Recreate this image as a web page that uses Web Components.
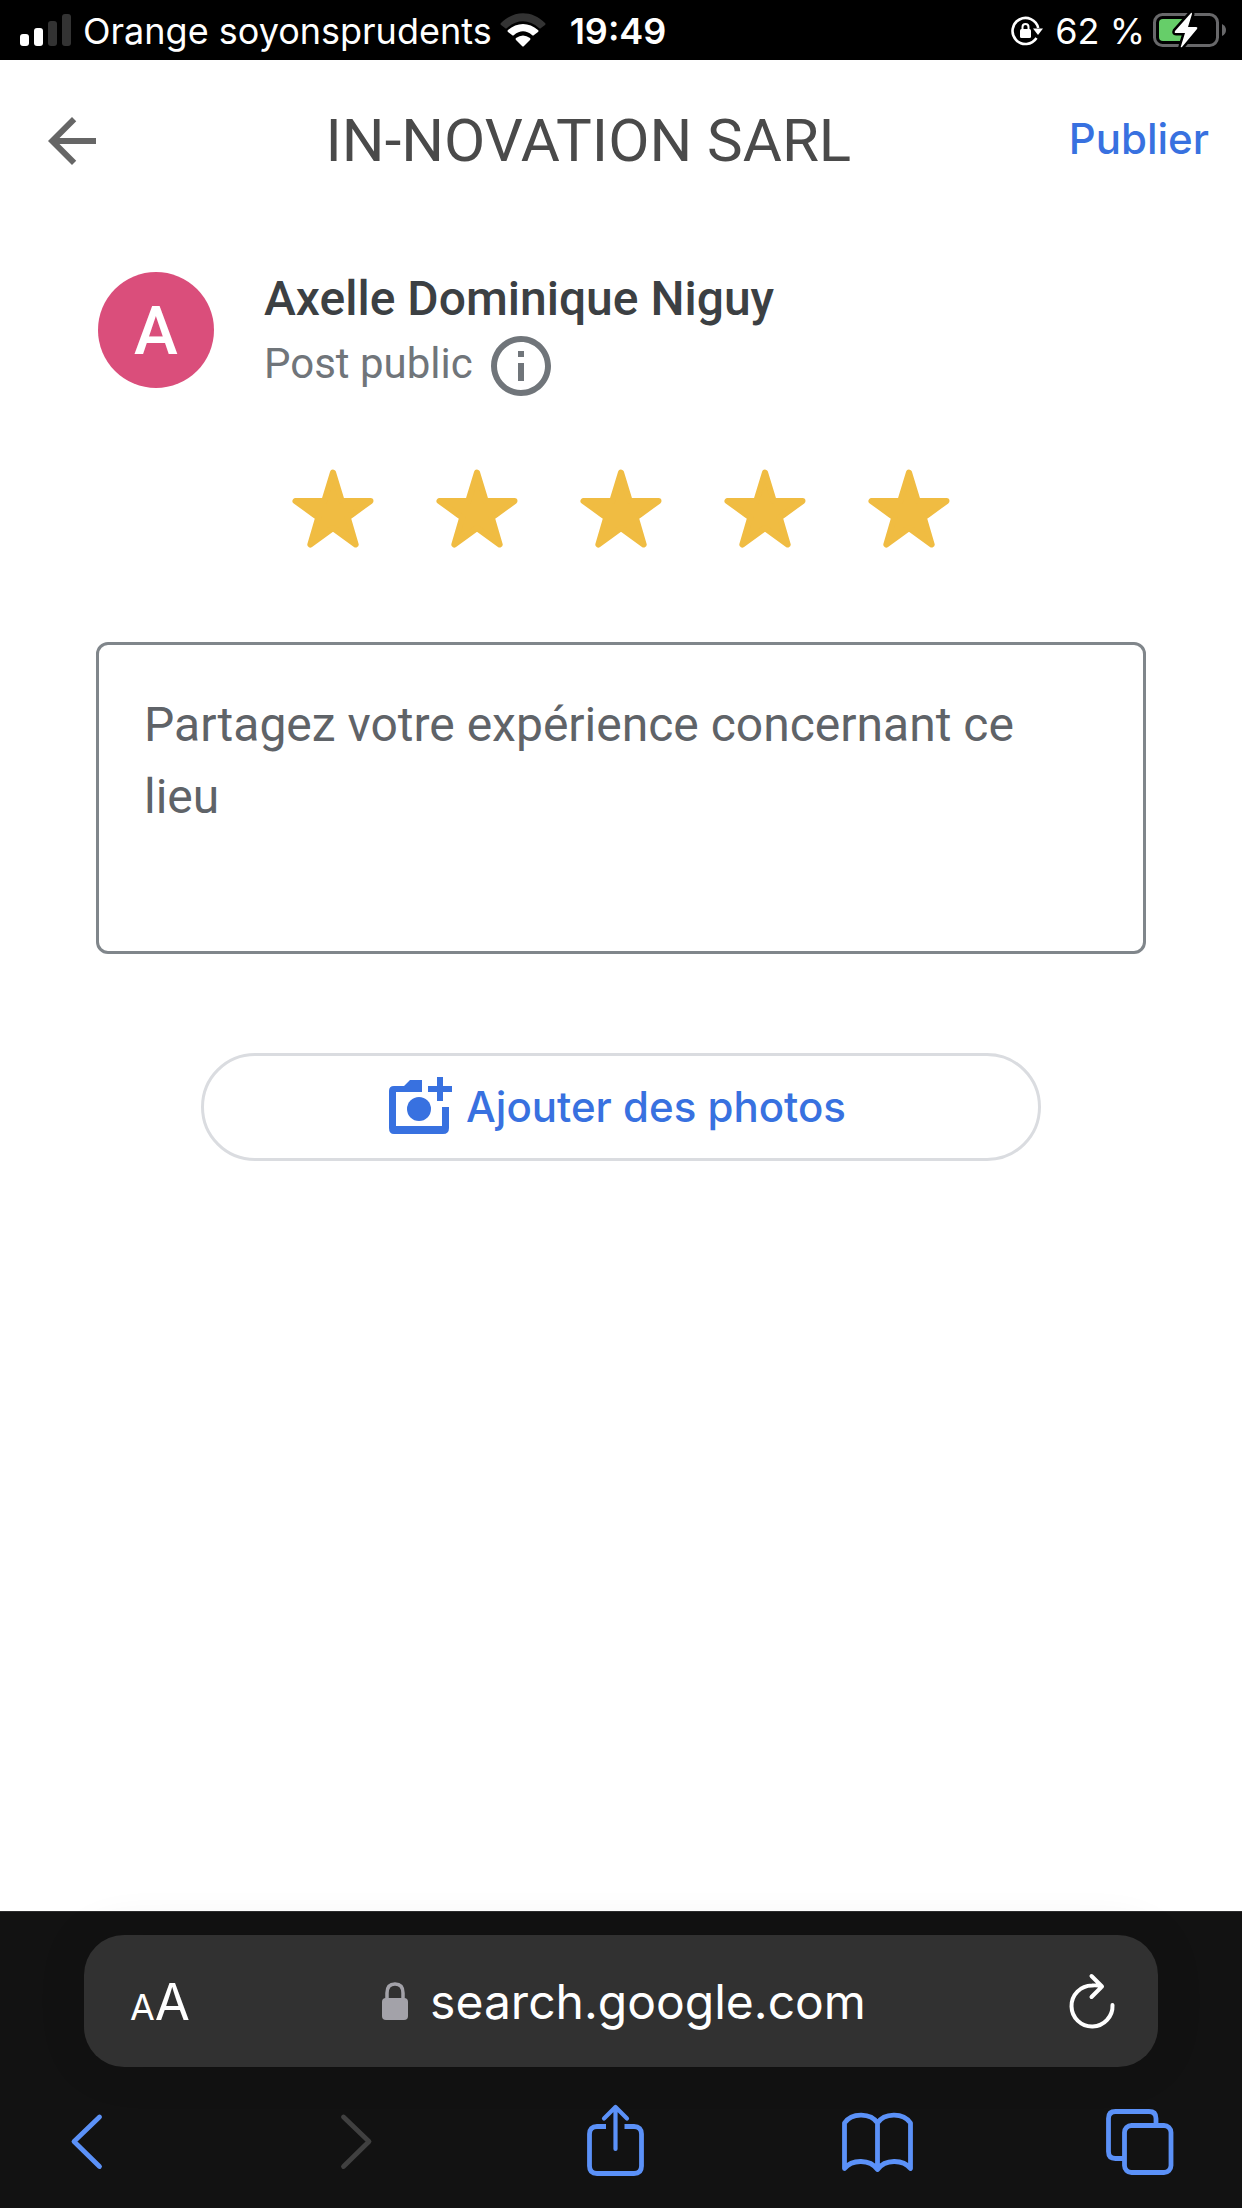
<!DOCTYPE html>
<html lang="fr">
<head>
<meta charset="utf-8">
<meta name="viewport" content="width=device-width, initial-scale=1">
<title>IN-NOVATION SARL</title>
<style>
  body { margin: 0; background: #fff; font-family: Roboto, "Liberation Sans", sans-serif; }
</style>
</head>
<body>
<review-app></review-app>

<script>
const define = (name, css, html) => {
  const template = document.createElement('template');
  template.innerHTML = `<style>
    *, *::before { box-sizing: border-box; }
    button { margin: 0; padding: 0; border: 0; background: none; font: inherit; color: inherit; cursor: pointer; }
    svg { display: block; flex: none; overflow: visible; }
    ${css}</style>${html}`;
  customElements.define(name, class extends HTMLElement {
    constructor() {
      super();
      this.attachShadow({ mode: 'open' }).append(template.content.cloneNode(true));
    }
  });
};

/* Phone status bar: network, time, battery */
define('status-bar', `
  :host { display: flex; align-items: center; justify-content: space-between; height: 60px; padding: 2px 16px 0 20px;
    background: #000; color: #fff; font: 400 36px/56px Inter, "Liberation Sans", sans-serif; white-space: nowrap; }
  div { display: flex; align-items: center; }
  .carrier { margin: 0 8px 0 12px; }
  time { margin-left: 24px; font-weight: 600; }
  .charge { margin: 0 8px 0 12px; }
`, `
  <div>
    <svg width="51" height="34" viewBox="0 1 51 34" aria-hidden="true">
      <g fill="#fff"><rect y="21" width="9" height="12" rx="3"/><rect x="14" y="15" width="9" height="18" rx="3"/></g>
      <g fill="#333"><rect x="28" y="8" width="9" height="25" rx="3"/><rect x="42" y="1" width="9" height="32" rx="3"/></g>
    </svg>
    <span class="carrier">Orange soyonsprudents</span>
    <svg width="46" height="34" viewBox="0 1 46 34" aria-hidden="true">
      <path fill="#333" d="M1 10C14-3 32-3 45 10Q46 11 45 12L41 15Q40 16 39 15C29 6 17 6 7 15Q6 16 5 15L1 12Q0 11 1 10Z"/>
      <path fill="#fff" d="M8 17C17 9 29 9 38 17Q39 18 38 19L34 22Q33 23 32 22C26 17 20 17 14 22Q13 23 12 22L8 19Q7 18 8 17Z"/>
      <path fill="#fff" d="M16 25Q23 20 30 25Q31 26 30 27L24 33Q23 34 22 33L16 27Q15 26 16 25Z"/>
    </svg>
    <time>19:49</time>
  </div>
  <div>
    <svg width="32" height="30" viewBox="0 0 32 30" aria-hidden="true">
      <path d="M27.200 12A13 13 0 1 0 25.500 22" fill="none" stroke="#fff" stroke-width="2.600"/>
      <path d="M22 12.500H32L27 19Z" fill="#fff"/>
      <rect x="9" y="13" width="11" height="9" rx="1.500" fill="#fff"/>
      <path d="M11.500 14V11Q11.500 8 14.500 8T17.500 11V14" fill="none" stroke="#fff" stroke-width="2"/>
    </svg>
    <span class="charge">62 %</span>
    <svg width="73" height="36" viewBox="0 1 73 36" aria-hidden="true">
      <rect x="1.500" y="2.500" width="63" height="31" rx="8" fill="none" stroke="#68686a" stroke-width="3"/>
      <rect x="6" y="7" width="26" height="22" rx="4" fill="#66ce69"/>
      <path d="M69 12Q73 14 73 18T69 24Z" fill="#68686a"/>
      <path d="M38 1Q39 0 39 2L35 15H43Q45 15 44 17L29 35Q27 36 28 34L32 21H23Q21 21 22 19Z" fill="#fff" stroke="#000" stroke-width="5" paint-order="stroke"/>
    </svg>
  </div>
`);

/* Title bar of the review form */
define('review-header', `
  :host { display: flex; align-items: center; height: 162px; padding: 0 33px 0 36px; }
  h1 { flex: 1; margin: 0; text-align: center; font-size: 60px; font-weight: 400; line-height: 72px; color: #4a4a4a; }
  .publish { padding-bottom: 4px; font: 500 42px/60px Inter, "Liberation Sans", sans-serif; color: #3871e0; }
`, `
  <button type="button" aria-label="Retour">
    <svg width="72" height="72" viewBox="0 0 24 24"><path fill="#666" d="M20 11H7.830l5.590-5.590L12 4l-8 8 8 8 1.410-1.410L7.830 13H20v-2z"/></svg>
  </button>
  <h1><slot></slot></h1>
  <button type="button" class="publish">Publier</button>
`);

/* Author of the review */
define('author-card', `
  :host { display: flex; align-items: flex-start; gap: 50px; }
  .avatar { display: flex; align-items: center; justify-content: center; flex: none; width: 116px; height: 116px; margin-top: 3px; padding-top: 4px;
    border-radius: 50%; background: #da4e7b; color: #fff; font-size: 66px; line-height: 80px; font-weight: 500; }
  .name { font-size: 48px; line-height: 60px; font-weight: 500; color: #3c4043; }
  .visibility { display: flex; gap: 12px; margin-top: 1px; font-size: 42px; line-height: 68px; color: #70757a; }
`, `
  <div class="avatar" aria-hidden="true">A</div>
  <div>
    <div class="name"><slot></slot></div>
    <div class="visibility">Post public
      <button type="button" aria-label="Informations">
        <svg width="72" height="72" viewBox="0 0 24 24"><path fill="#70757a" d="M11 7h2v2h-2zm0 4h2v6h-2zm1-9C6.480 2 2 6.480 2 12s4.480 10 10 10 10-4.480 10-10S17.520 2 12 2zm0 18c-4.410 0-8-3.590-8-8s3.590-8 8-8 8 3.590 8 8-3.590 8-8 8z"/></svg>
      </button>
    </div>
  </div>
`);

/* One to five stars */
const star = n => `<label><input type="radio" name="rating" value="${n}" aria-label="${n} sur 5"${n === 5 ? ' checked' : ''}>
  <svg width="84" height="80" viewBox="-42 0 84 80" aria-hidden="true">
    <path d="M0 3.500L8.700 32H37.500L14.800 48.500L22.700 75.500L0 59L-22.700 75.500L-14.800 48.500L-37.500 32H-8.700Z" fill="#f0bc42" stroke="#f0bc42" stroke-width="6" stroke-linejoin="round"/>
  </svg></label>`;
define('star-rating', `
  :host { display: flex; justify-content: center; }
  label { display: grid; place-items: center; width: 144px; height: 108px; cursor: pointer; }
  input, svg { grid-area: 1 / 1; }
  input { appearance: none; width: 84px; height: 80px; margin: 0; }
`, [1, 2, 3, 4, 5].map(star).join(''));

define('review-text', `
  :host { display: block; }
  textarea { display: block; width: 100%; height: 312px; padding: 44px 90px 44px 45px; border: 3px solid #80868b; border-radius: 12px;
    background: none; resize: none; overflow: hidden; font: 400 48px/72px Roboto, "Liberation Sans", sans-serif; color: #3c4043; }
  textarea::placeholder { color: #5f6368; opacity: 1; }
`, `<textarea aria-label="Votre avis" placeholder="Partagez votre expérience concernant ce lieu"></textarea>`);

define('photo-button', `
  :host { display: block; }
  button { display: flex; align-items: center; justify-content: center; gap: 12px; width: 80%; height: 108px; margin: 0 auto; padding-right: 8px;
    border: 3px solid #dadce0; border-radius: 54px; font: 500 42px/60px Inter, "Liberation Sans", sans-serif; color: #3871e0; }
`, `
  <button type="button">
    <svg width="66" height="60" viewBox="0 2 66 60" fill="#3871e0" aria-hidden="true">
      <path d="M6 11H16L22 5H34V17H8V51H54V32H61V53Q61 59 55 59H6Q1 59 1 53V16Q1 11 6 11Z"/>
      <circle cx="31" cy="34" r="12"/>
      <path d="M49 2H55V11H64V17H55V26H49V17H40V11H49Z"/>
    </svg>
    <slot></slot>
  </button>
`);

/* Browser chrome at the foot of the screen */
define('address-bar', `
  :host { display: flex; align-items: center; height: 132px; margin: 0 84px; padding: 2px 40px 0 46px; border-radius: 40px;
    background: #313131; box-shadow: 0 0 48px rgba(0, 0, 0, .12); color: #fff; font: 400 48px/60px Inter, "Liberation Sans", sans-serif; }
  .side { flex: 1; display: flex; }
  .end { justify-content: flex-end; }
  .format { padding-top: 4px; font-size: 51px; }
  .small { font-size: 36px; }
  .url { display: flex; align-items: center; gap: 22px; color: inherit; text-decoration: none; }
`, `
  <div class="side"><button type="button" class="format" aria-label="Format de page"><span class="small">A</span>A</button></div>
  <a class="url" href="#">
    <svg width="26" height="38" viewBox="0 1 26 38" aria-hidden="true">
      <rect y="16" width="26" height="22" rx="4" fill="#a3a2a9"/>
      <path d="M5 17V11Q5 2 13 2T21 11V17" fill="none" stroke="#a3a2a9" stroke-width="3.500"/>
    </svg>
    <slot></slot>
  </a>
  <div class="side end">
    <button type="button" aria-label="Actualiser">
      <svg width="50" height="60" viewBox="0 1 50 60" fill="none" stroke="#fff" stroke-width="4" stroke-linecap="round" stroke-linejoin="round">
        <path d="M44.500 34A20.500 20.500 0 1 1 24 14.500Q30 14 34 15.500M23.500 5L34 15.500L23.500 26"/>
      </svg>
    </button>
  </div>
`);

define('tool-bar', `
  :host { display: flex; justify-content: space-between; padding: 37px 67px 32px 50px; color: #5b91f8; }
  svg { width: 72px; height: 72px; fill: none; stroke: currentColor; stroke-width: 4.800; stroke-linecap: round; stroke-linejoin: round; }
  button:disabled { color: #404040; }
`, `
  <button type="button" aria-label="Page précédente"><svg viewBox="0 0 72 72"><path d="M49.500 13L24 37.500L49.500 62.500"/></svg></button>
  <button type="button" aria-label="Page suivante" disabled><svg viewBox="0 0 72 72"><path d="M30.500 13L56 37.500L30.500 62.500"/></svg></button>
  <button type="button" aria-label="Partager"><svg viewBox="1 0 72 72">
    <path stroke-linecap="butt" d="M30 22.500H21Q13.500 22.500 13.500 30V62Q13.500 69.500 21 69.500H58Q65.500 69.500 65.500 62V30Q65.500 22.500 58 22.500H48.500"/>
    <path stroke-width="4.200" d="M39.500 45V3M28 14.500L39.500 3L51 14.500"/></svg></button>
  <button type="button" aria-label="Signets"><svg viewBox="0 0 72 72">
    <path d="M37.500 19C31 9 12 8 4.500 19V64.500C12 55 30 55 37.500 65.500C45 55 63 55 70.500 64.500V19C63 8 44 9 37.500 19V65"/></svg></button>
  <button type="button" aria-label="Onglets"><svg viewBox="0 0 72 72">
    <rect x="21.500" y="21.500" width="46.500" height="47" rx="7"/>
    <path stroke-linecap="butt" d="M53 21.500V14.500Q53 7.500 46 7.500H12.500Q5.500 7.500 5.500 14.500V47.500Q5.500 54.500 12.500 54.500H21.500"/></svg></button>
`);

define('browser-chrome', `
  :host { display: block; padding-top: 23px; border-top: 1px solid #2c2c2d; background: #121212; }
`, `<address-bar>search.google.com</address-bar><tool-bar></tool-bar>`);

define('review-app', `
  :host { display: flex; flex-direction: column; min-height: 100vh; }
  main { flex: 1; padding: 47px 96px; }
  author-card { padding-left: 2px; }
  star-rating { margin-top: 53px; }
  review-text { margin-top: 79px; }
  photo-button { margin-top: 99px; }
`, `
  <status-bar></status-bar>
  <review-header>IN-NOVATION SARL</review-header>
  <main>
    <author-card>Axelle Dominique Niguy</author-card>
    <star-rating role="radiogroup" aria-label="Note"></star-rating>
    <review-text></review-text>
    <photo-button>Ajouter des photos</photo-button>
  </main>
  <browser-chrome></browser-chrome>
`);
</script>
</body>
</html>
